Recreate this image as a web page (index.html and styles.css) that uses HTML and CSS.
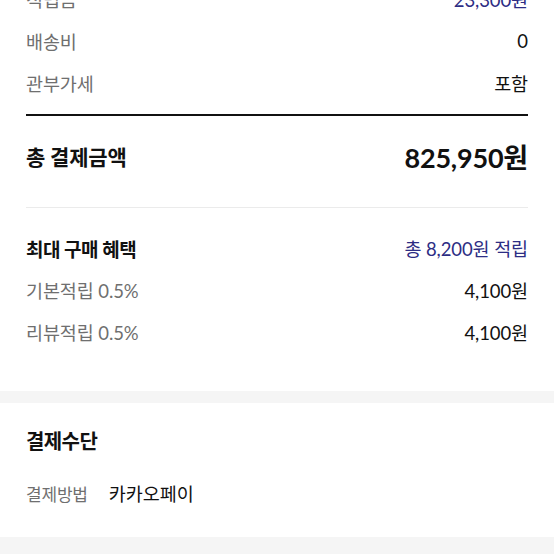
FILE: index.html
```html
<!DOCTYPE html>
<html lang="ko">
<head>
<meta charset="utf-8">
<link rel="stylesheet" href="styles.css">
</head>
<body>
<div class="screen">
  <section class="card summary">
    <div class="row"><span class="label">적립금</span><span class="value accent">23,300원</span></div>
    <div class="row"><span class="label">배송비</span><span class="value">0</span></div>
    <div class="row"><span class="label">관부가세</span><span class="value">포함</span></div>
    <div class="total">
      <span class="total-label">총 결제금액</span>
      <span class="total-value">825,950원</span>
    </div>
    <div class="benefit">
      <div class="row"><span class="head-label">최대 구매 혜택</span><span class="value accent">총 8,200원 적립</span></div>
      <div class="row"><span class="label">기본적립 0.5%</span><span class="value">4,100원</span></div>
      <div class="row"><span class="label">리뷰적립 0.5%</span><span class="value">4,100원</span></div>
    </div>
  </section>
  <section class="card pay">
    <h2 class="pay-title">결제수단</h2>
    <div class="pay-row"><span class="pay-label">결제방법</span><span class="pay-value">카카오페이</span></div>
  </section>
  <div class="gap"></div>
</div>
</body>
</html>
```
FILE: styles.css
```css
* { box-sizing: border-box; }
html, body { margin: 0; padding: 0; background: #f5f5f5; }
body {
  font-family: "Lato", "Noto Sans CJK KR", sans-serif;
  color: #111;
  overflow: hidden;
  height: 554px;
}
.screen {
  display: flex;
  flex-direction: column;
  gap: 12px;
  margin-top: -22px;
}
.card { background: #fff; padding: 0 26px; }
.row {
  display: flex;
  justify-content: space-between;
  align-items: center;
  height: 42px;
  font-size: 18.5px;
  letter-spacing: -0.1px;
}
.label { color: #6f6f6f; }
.value { color: #111; }
.accent { color: #2d2d84; }
.summary { padding-bottom: 38px; }
.total {
  border-top: 2px solid #111;
  border-bottom: 1px solid #ebebeb;
  margin-top: 10px;
  height: 94px;
  padding-bottom: 11px;
  display: flex;
  justify-content: space-between;
  align-items: center;
}
.total-label { font-size: 21px; font-weight: 700; letter-spacing: -0.2px; }
.total-value { font-size: 27px; font-weight: 700; letter-spacing: -0.2px; }
.benefit { padding-top: 19px; }
.head-label { font-weight: 700; font-size: 19px; letter-spacing: -0.5px; }
.pay { padding-top: 20px; padding-bottom: 24px; }
.pay-title {
  margin: 0;
  font-size: 20px;
  font-weight: 700;
  letter-spacing: -0.6px;
  height: 36px;
  line-height: 36px;
}
.pay-row {
  display: flex;
  gap: 21px;
  align-items: center;
  height: 40px;
  margin-top: 14px;
}
.pay-label { color: #6f6f6f; font-size: 17px; letter-spacing: -0.2px; }
.pay-value { color: #111; font-size: 18.5px; letter-spacing: 0; }
.gap { height: 40px; }
```
